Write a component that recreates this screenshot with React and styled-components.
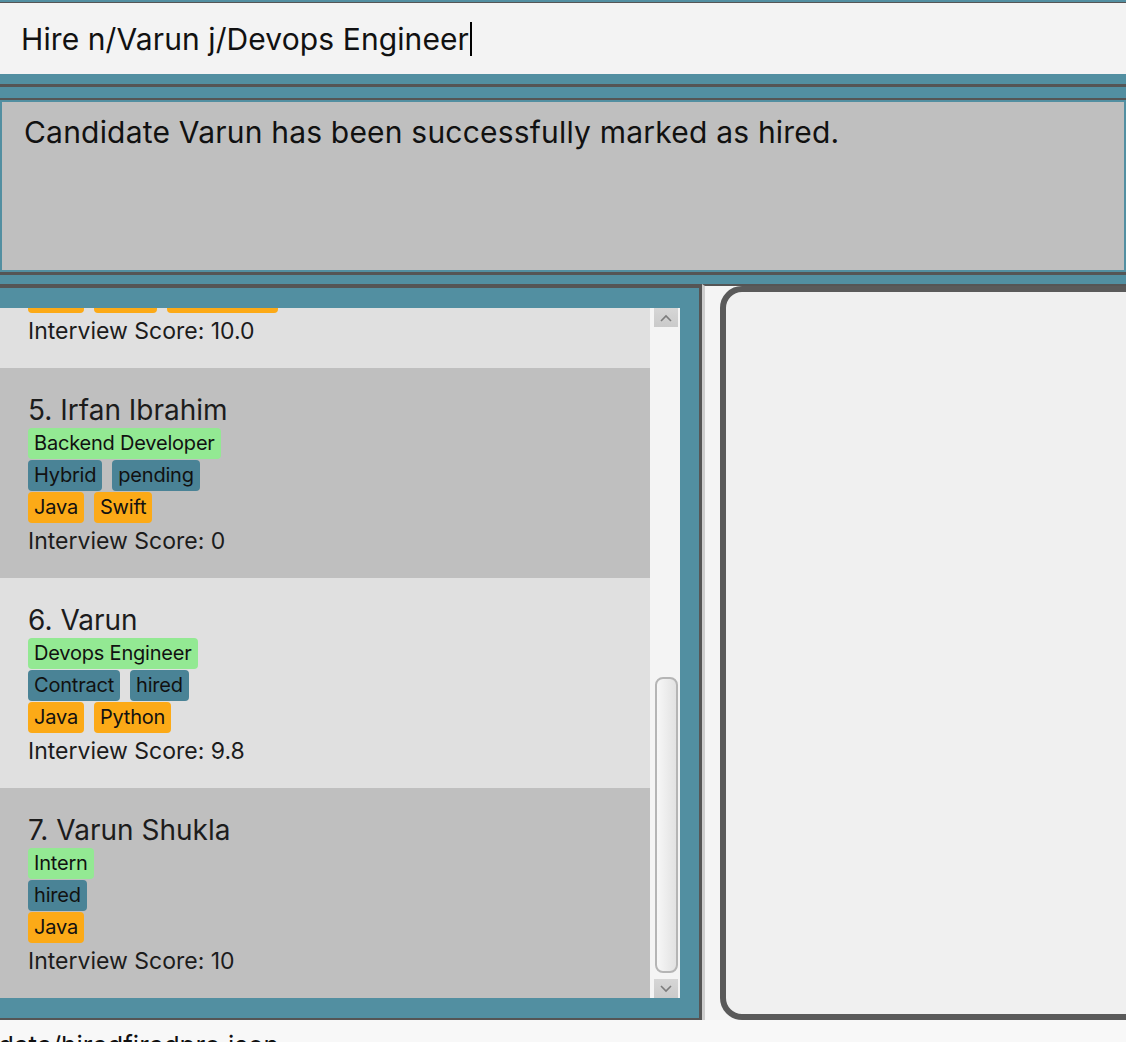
import React from 'react'
import styled, { createGlobalStyle } from 'styled-components'

const TEAL = '#528fa1'
const DARK = '#555555'

const Global = createGlobalStyle`
  html, body { margin: 0; padding: 0; }
  body { font-family: Inter, "Open Sans", sans-serif; }
`

const Page = styled.div`
  width: 100vw;
  height: 100vh;
  background: ${TEAL};
  display: flex;
  flex-direction: column;
  overflow: hidden;
  color: #1c1c1c;
`

const CommandBox = styled.div`
  margin-top: 2px;
  border-top: 1px solid ${DARK};
  height: 71px;
  flex-shrink: 0;
  background: #f3f3f3;
  display: flex;
  align-items: center;
  padding-left: 21px;
  font-size: 30px;
  letter-spacing: 0.1px;
  color: #111;
  white-space: nowrap;
`

const Caret = styled.span`
  display: inline-block;
  width: 2px;
  height: 34px;
  background: #000;
  margin-left: 1px;
`

const ResultSection = styled.div`
  margin-top: 10px;
  border-top: 3px solid ${DARK};
  border-bottom: 3px solid ${DARK};
  padding-top: 11px;
  flex-shrink: 0;
`

const Rule = styled.div`
  height: ${p => p.$h}px;
  background: ${DARK};
`

const ResultBox = styled.div`
  border: 2px solid ${TEAL};
  background: #bfbfbf;
  padding: 12px 0 0 22px;
  box-sizing: border-box;
  height: 172px;
  font-size: 30px;
  line-height: 36px;
  letter-spacing: 0.2px;
  color: #111;
  white-space: nowrap;
`

const Main = styled.div`
  margin-top: 9px;
  flex: 1;
  display: flex;
  min-height: 0;
`

const ListPanel = styled.div`
  width: 702px;
  box-sizing: border-box;
  flex-shrink: 0;
  border-top: 4px solid ${DARK};
  border-bottom: 2px solid ${DARK};
  border-right: 3px solid ${DARK};
  padding: 20px 19px 20px 0;
  display: flex;
`

const Viewport = styled.div`
  width: 650px;
  height: 690px;
  overflow: hidden;
  display: flex;
  flex-direction: column;
  justify-content: flex-end;
`

const Cell = styled.div`
  flex-shrink: 0;
  height: 210px;
  box-sizing: border-box;
  padding: 25px 0 0 28px;
  background: ${p => (p.$odd ? '#bfbfbf' : '#e0e0e0')};
`

const Name = styled.div`
  font-size: 28px;
  line-height: 34px;
  color: #1c1c1c;
  margin-bottom: 1px;
`

const TagRow = styled.div`
  display: flex;
  gap: 10px;
  margin-bottom: 1px;
`

const TAG_COLORS = {
  job: '#93e993',
  status: '#4a8396',
  skill: '#fcaa17',
}

const Tag = styled.span`
  height: 31px;
  line-height: 31px;
  padding: 0 6px;
  border-radius: 4px;
  font-size: 20px;
  letter-spacing: -0.2px;
  color: #111;
  background: ${p => TAG_COLORS[p.$kind]};
`

const Score = styled.div`
  font-size: 23px;
  line-height: 34px;
  color: #1c1c1c;
`

const ScrollBar = styled.div`
  width: 30px;
  background: #f4f4f4;
  display: flex;
  flex-direction: column;
  align-items: center;
  padding-left: 2px;
  box-sizing: border-box;
`

const ArrowButton = styled.div`
  width: 24px;
  height: 19px;
  flex-shrink: 0;
  background: linear-gradient(#d6d6d6, #cacaca);
  display: flex;
  align-items: center;
  justify-content: center;
`

const Track = styled.div`
  flex: 1;
  width: 100%;
  display: flex;
  flex-direction: column;
  align-items: center;
  justify-content: flex-end;
  padding-bottom: 6px;
  box-sizing: border-box;
`

const Thumb = styled.div`
  width: 23px;
  height: 296px;
  box-sizing: border-box;
  border: 2px solid #b5b5b5;
  border-radius: 8px;
  background: linear-gradient(90deg, #f7f7f7, #e2e2e2);
`

const Side = styled.div`
  flex: 1;
  display: flex;
  background: #f4f4f4;
  border-top: 2px solid ${DARK};
  border-left: 3px solid #cdcdcd;
  padding-left: 15px;
`

const Card = styled.div`
  flex: 1;
  margin-right: -30px;
  border: 6px solid #5a5a5a;
  border-radius: 22px;
  background: #f0f0f0;
`

const StatusBar = styled.div`
  height: 22px;
  flex-shrink: 0;
  background: #f8f8f8;
  overflow: hidden;
  font-size: 26px;
  line-height: 32px;
  padding-top: 10px;
  box-sizing: border-box;
  margin-left: -2px;
  color: #111;
  white-space: nowrap;
`

const candidates = [
  { n: 1, name: 'Alex Yeoh', job: 'Software Engineer', status: ['Remote', 'pending'], skills: ['Java', 'Python'], score: '7.5' },
  { n: 2, name: 'Bernice Yu', job: 'Data Analyst', status: ['Hybrid', 'pending'], skills: ['SQL', 'Python'], score: '8.0' },
  { n: 3, name: 'Charlotte Oliveiro', job: 'UI Designer', status: ['Onsite', 'pending'], skills: ['Figma'], score: '6.2' },
  { n: 4, name: 'David Li', job: 'Frontend Developer', status: ['Remote', 'hired'], skills: ['Java', 'Kotlin', 'JavaScript'], score: '10.0' },
  { n: 5, name: 'Irfan Ibrahim', job: 'Backend Developer', status: ['Hybrid', 'pending'], skills: ['Java', 'Swift'], score: '0' },
  { n: 6, name: 'Varun', job: 'Devops Engineer', status: ['Contract', 'hired'], skills: ['Java', 'Python'], score: '9.8' },
  { n: 7, name: 'Varun Shukla', job: 'Intern', status: ['hired'], skills: ['Java'], score: '10' },
]

const Chevron = ({ up }) => (
  <svg width="12" height="8" viewBox="0 0 12 8">
    <polyline
      points={up ? '1,7 6,2 11,7' : '1,1 6,6 11,1'}
      fill="none"
      stroke="#7c7c7c"
      strokeWidth="1.6"
    />
  </svg>
)

const App = () => {
  return (
    <>
      <Global />
      <Page>
        <CommandBox>
          Hire n/Varun j/Devops Engineer<Caret />
        </CommandBox>
        <ResultSection>
          <Rule $h={2} />
          <ResultBox>Candidate Varun has been successfully marked as hired.</ResultBox>
        </ResultSection>
        <Main>
          <ListPanel>
            <Viewport>
              {candidates.map((c) => (
                <Cell key={c.n} $odd={c.n % 2 === 1}>
                  <Name>{c.n}. {c.name}</Name>
                  <TagRow><Tag $kind="job">{c.job}</Tag></TagRow>
                  <TagRow>{c.status.map((s) => <Tag key={s} $kind="status">{s}</Tag>)}</TagRow>
                  <TagRow>{c.skills.map((s) => <Tag key={s} $kind="skill">{s}</Tag>)}</TagRow>
                  <Score>Interview Score: {c.score}</Score>
                </Cell>
              ))}
            </Viewport>
            <ScrollBar>
              <ArrowButton><Chevron up /></ArrowButton>
              <Track><Thumb /></Track>
              <ArrowButton><Chevron /></ArrowButton>
            </ScrollBar>
          </ListPanel>
          <Side>
            <Card />
          </Side>
        </Main>
        <StatusBar>data/hiredfiredpro.json</StatusBar>
      </Page>
    </>
  )
}

export default App
